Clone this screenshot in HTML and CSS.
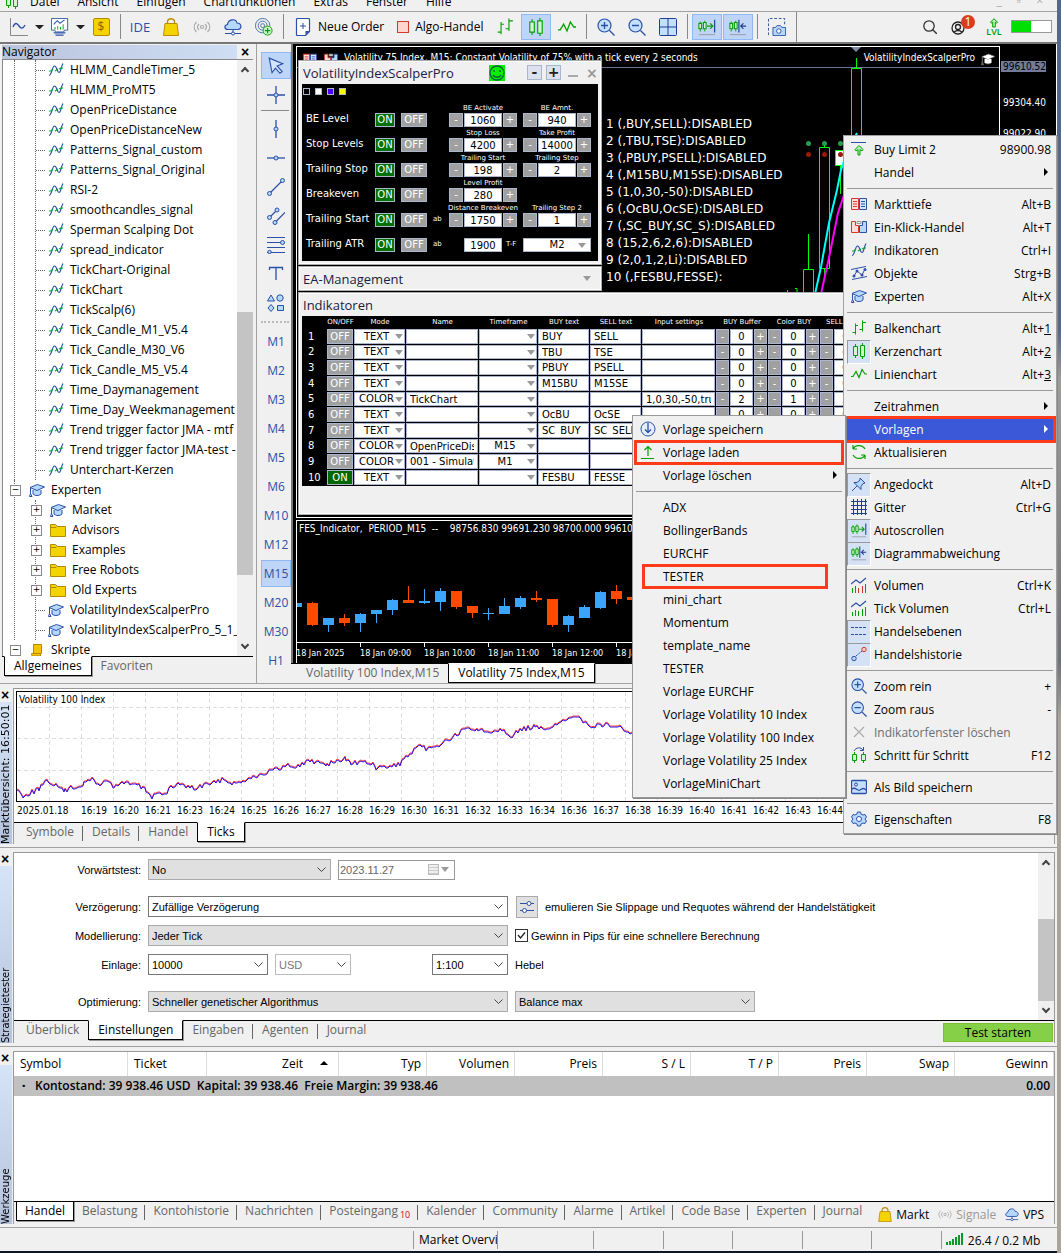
FILE: index.html
```
<!DOCTYPE html>
<html lang="de">
<head>
  <meta charset="UTF-8">
  <meta name="viewport" content="width=device-width, initial-scale=1.0">
  <title>Volatility 75 Index,M15</title>
  <link rel="stylesheet" href="styles.css">
</head>
<body>
  <svg class="sprite" aria-hidden="true">
    <symbol id="i-indicator" viewBox="0 0 16 16"><path d="M1 13.500C4 13 4 4 6.500 4S9 10.500 11 10.500s2-6 4-9" fill="none" stroke="#2b50a8" stroke-width="1.200"/><path d="M1 9h2l2-2M7 9l3-2M11 7l2-1h2" fill="none" stroke="#0a3" stroke-width="1.200"/></symbol>
    <symbol id="i-cap" viewBox="0 0 16 16"><path d="M4 8v4c2 2 6 2 8 0V8" fill="#b5d8ff" stroke="#2b50a8"/><path d="M1 5.500L8.500 2.500 15.500 5 8 8.500z" fill="#b5d8ff" stroke="#2b50a8"/><path d="M1.500 6v6M.5 14.500l1-3 1.500 3z" fill="none" stroke="#2b50a8"/></symbol>
    <symbol id="i-folder" viewBox="0 0 16 16"><path d="M.5 2.500h5l2 2h8v10H.5z" fill="#f4d400" stroke="#b58a00"/><path d="M1 5.500h5l1-1" fill="none" stroke="#b58a00"/></symbol>
    <symbol id="i-script" viewBox="0 0 16 16"><path d="M4.500 2.500h8v9h-8zM2.500 11.500h9v2.500h-8c-1 0-1-1-1-2.500z" fill="#f4c400" stroke="#b58a00"/></symbol>
    <symbol id="i-buylimit" viewBox="0 0 16 16"><path d="M0 1.500h15" stroke="#2b50a8"/><path d="M8 4.500l4 4-1 1.500-2-1.500V14H7V8.500L5 10 4 8.500z" fill="#b7f0b7" stroke="#00a000"/></symbol>
    <symbol id="i-depth" viewBox="0 0 16 16"><path d="M.5 2.500h7v11h-7z" fill="#ffdcd6" stroke="#d0392b"/><path d="M8.500 2.500h7v11h-7z" fill="#d6e6ff" stroke="#2b50a8"/><path d="M2 5.500h4M2 8h4M2 10.500h4" stroke="#d0392b"/><path d="M10 5.500h4M10 8h4M10 10.500h4" stroke="#2b50a8"/></symbol>
    <symbol id="i-oneclick" viewBox="0 0 16 16"><path d="M.5 2.500h4v4h3v7h-7z" fill="#ffdcd6" stroke="#d0392b"/><path d="M15.500 2.500h-4v4h-3v7h7z" fill="#b5d8ff" stroke="#2b50a8"/><path d="M6 2.500h4v2H6z" fill="#fff" stroke="#999"/></symbol>
    <symbol id="i-objects" viewBox="0 0 16 16"><path d="M0 4.500L15 1.500M1 14.500l15-3M3 11l3-5 5 4 3-6" fill="none" stroke="#2b50a8"/><g fill="#2b50a8"><circle cx="3" cy="11" r="1.500"/><circle cx="6" cy="6" r="1.500"/><circle cx="11" cy="10" r="1.500"/><circle cx="14" cy="4.500" r="1.500"/></g></symbol>
    <symbol id="i-bars" viewBox="0 0 16 16"><path d="M4.500 3.500v11M1.500 12.500h3M4 5.500h3M11.500.5v11M8.500 9.500h3M12 2.500h3" fill="none" stroke="#00a000"/></symbol>
    <symbol id="i-candles" viewBox="0 0 16 16"><path d="M4.500 1v14M11.500 0v16" stroke="#00a000"/><path d="M2.500 3.500h4v9h-4zM9.500 2.500h4v11h-4z" fill="#d6f5d6" stroke="#00a000"/></symbol>
    <symbol id="i-line" viewBox="0 0 16 16"><path d="M0 10.500h2l3-5 3 6 3-8 3 4.500h2" fill="none" stroke="#00a000" stroke-width="1.200"/></symbol>
    <symbol id="i-refresh" viewBox="0 0 16 16"><path d="M14 5C11 0 4 1 2 5V1M2 5h4M2 11c3 5 10 4 12 0v4M14 11h-4" fill="none" stroke="#00a000" stroke-width="1.200"/></symbol>
    <symbol id="i-pin" viewBox="0 0 16 16"><path d="M9 2l5 5-2 .5-2 3v3L3 6.500h3l3-2.500zM6 10l-5 5" fill="#b5d8ff" stroke="#2b50a8"/></symbol>
    <symbol id="i-grid" viewBox="0 0 16 16"><path d="M2.500 0v16M6.500 0v16M10.500 0v16M14.500 0v16M0 2.500h16M0 6.500h16M0 10.500h16M0 14.500h16" stroke="#1d3f95"/></symbol>
    <symbol id="i-autoscroll" viewBox="0 0 20 20"><path d="M2.500 4v11M7.500 3v12" stroke="#00a000"/><path d="M1 6h3v6H1zM6 5h3v7H6z" fill="#d6f5d6" stroke="#00a000" stroke-width="1.200"/><path d="M10 9h6M13.500 6l3 3-3 3" fill="none" stroke="#00a000" stroke-width="1.300"/><path d="M18.500 2v14" stroke="#1d3f95" stroke-width="1.300"/><path d="M1 18.500h18" stroke="#999"/></symbol>
    <symbol id="i-shift" viewBox="0 0 20 20"><path d="M2.500 4v11M7.500 3v12" stroke="#00a000"/><path d="M1 6h3v6H1zM6 5h3v7H6z" fill="#d6f5d6" stroke="#00a000" stroke-width="1.200"/><path d="M13 9h6M16 6l-3 3 3 3M11 2v14" fill="none" stroke="#1d3f95" stroke-width="1.300"/><path d="M1 18.500h18" stroke="#999"/></symbol>
    <symbol id="i-volume" viewBox="0 0 16 16"><path d="M0 7l5-4 4 3 6-5" fill="none" stroke="#2b50a8" stroke-width="1.200"/><path d="M1.500 11v5M4.500 9v7M14.500 7v9" stroke="#00a000"/><path d="M7.500 11v5M11.500 9v7" stroke="#d0392b"/></symbol>
    <symbol id="i-tickvolume" viewBox="0 0 16 16"><path d="M0 7l5-4 4 3 6-5" fill="none" stroke="#2b50a8" stroke-width="1.200"/><path d="M1.500 12v4M4.500 10v6M7.500 11v5M11.500 9v7M14.500 7v9" stroke="#00a000"/></symbol>
    <symbol id="i-levels" viewBox="0 0 16 16"><path d="M0 4.500h16M0 11.500h16" stroke="#2b50a8" stroke-dasharray="3 1"/></symbol>
    <symbol id="i-history" viewBox="0 0 16 16"><path d="M5 10l6-5" stroke="#2b50a8" stroke-dasharray="2 1"/><circle cx="3" cy="12.500" r="2.200" fill="#b5d8ff" stroke="#2b50a8"/><circle cx="13" cy="3.500" r="2.200" fill="#ffd0c8" stroke="#d0392b"/></symbol>
    <symbol id="i-zoomin" viewBox="0 0 18 18"><circle cx="7.500" cy="7.500" r="6.500" fill="#c4e0ff" stroke="#2b50a8" stroke-width="1.200"/><path d="M4 7.500h7M7.500 4v7M12.500 12.500l5 5" stroke="#2b50a8" stroke-width="1.400"/></symbol>
    <symbol id="i-zoomout" viewBox="0 0 18 18"><circle cx="7.500" cy="7.500" r="6.500" fill="#c4e0ff" stroke="#2b50a8" stroke-width="1.200"/><path d="M4 7.500h7M12.500 12.500l5 5" stroke="#2b50a8" stroke-width="1.400"/></symbol>
    <symbol id="i-delete" viewBox="0 0 16 16"><path d="M3 3l10 10M13 3L3 13" stroke="#aaa" stroke-width="1.200"/></symbol>
    <symbol id="i-step" viewBox="0 0 16 16"><path d="M3.500 5v11M12.500 5v11" stroke="#00a000"/><path d="M1.500 7.500h4v6h-4zM10.500 7.500h4v6h-4z" fill="#d6f5d6" stroke="#00a000"/><path d="M3 4c2-4 7-4 9-1M12.500 0v3.500H9" fill="none" stroke="#2b50a8"/></symbol>
    <symbol id="i-image" viewBox="0 0 16 16"><rect x=".5" y="1.500" width="15" height="13" rx="1" fill="#c4e0ff" stroke="#2b50a8" stroke-width="1.300"/><path d="M1 10c4-3 5 3 8 1s4-2 6 0" fill="none" stroke="#2b50a8" stroke-width="1.300"/><circle cx="5" cy="5.500" r="1.500" fill="none" stroke="#2b50a8"/></symbol>
    <symbol id="i-gear" viewBox="0 0 16 16"><path d="M6.500 1h3l.5 2 2 1 2-.5 1.500 2.500L14 8l1.500 2-1.500 2.500-2-.5-2 1-.5 2h-3L6 13l-2-1-2 .5L.5 10 2 8 .5 6 2 3.500 4 4l2-1z" fill="#b5d8ff" stroke="#2b50a8"/><circle cx="8" cy="8" r="2.500" fill="#fff" stroke="#2b50a8"/></symbol>
    <symbol id="i-save" viewBox="0 0 16 16"><circle cx="8" cy="8" r="7" fill="#e4efff" stroke="#2b50a8"/><path d="M8 2v9M5 8.500l3 3 3-3" fill="none" stroke="#2b50a8" stroke-width="1.300"/></symbol>
    <symbol id="i-load" viewBox="0 0 16 16"><path d="M8 3v9M4.500 6L8 2.500 11.500 6M1 14.500h13" fill="none" stroke="#00a000" stroke-width="1.200"/></symbol>
    <symbol id="i-chart" viewBox="0 0 18 18"><path d="M.5 0v17.500H18" fill="none" stroke="#888"/><path d="M3 9c2-5 4-4 6-1s4 3 6-1" fill="none" stroke="#2b50a8" stroke-width="1.400"/></symbol>
    <symbol id="i-charts" viewBox="0 0 20 20"><path d="M.5.5h18v13H15l-1 2H5l-1-2H.5z" fill="#fff" stroke="#2b50a8"/><path d="M3 16.500h13M5 19h9" stroke="#2b50a8" stroke-width="1.200"/><path d="M3 7l4-4 3 3 5-4" fill="none" stroke="#2b50a8" stroke-width="1.200"/><path d="M4.500 10v3M7.500 9v4M10.500 10v3M13.500 7v6" stroke="#00a000"/></symbol>
    <symbol id="i-bag" viewBox="0 0 16 18"><path d="M4.500 6V3c1-3 6-3 7 0v3" fill="none" stroke="#c08a00" stroke-width="1.300"/><path d="M2 5.500h12l1.500 12H.5z" fill="#f4d400" stroke="#c08a00"/></symbol>
    <symbol id="i-signal" viewBox="0 0 18 16"><g fill="none" stroke="#aaa" stroke-width="1.200"><circle cx="9" cy="8" r="1.500"/><path d="M6 5c-2 2-2 4 0 6M12 5c2 2 2 4 0 6M3.500 3c-3 3-3 7 0 10M14.500 3c3 3 3 7 0 10"/></g></symbol>
    <symbol id="i-cloud" viewBox="0 0 18 18"><path d="M4 11.500C0 11.500 0 7 3.500 6.500 4 1 12 0 13 5c5 0 5 6.500 1 6.500z" fill="#b5d8ff" stroke="#2b50a8" stroke-width="1.200"/><path d="M9 12v3M1 15.500h16" stroke="#2b50a8"/><circle cx="9" cy="15.500" r="1.500" fill="#fff" stroke="#2b50a8"/></symbol>
    <symbol id="i-target" viewBox="0 0 20 20"><g fill="none" stroke="#3d66a8"><circle cx="8.500" cy="8.500" r="8"/><circle cx="8.500" cy="8.500" r="5"/><circle cx="8.500" cy="8.500" r="2.200"/></g><circle cx="14" cy="14" r="5" fill="#c8f5c8" stroke="#00a000"/><path d="M11 14h6M14 11v6" stroke="#00a000" stroke-width="1.300"/></symbol>
    <symbol id="i-order" viewBox="0 0 14 18"><path d="M.5 1.500q0-1 1-1h11q1 0 1 1v12l-4 4h-8q-1 0-1-1z" fill="#fff" stroke="#2b50a8" stroke-width="1.200"/><path d="M9.500 17v-4h4" fill="#2b50a8"/><path d="M4 8h6M7 5v6" stroke="#2b50a8"/></symbol>
    <symbol id="i-windows" viewBox="0 0 18 18"><rect x=".5" y=".5" width="17" height="17" rx="1" fill="#c4e0ff" stroke="#1d3f95"/><path d="M9 0v18M0 9h18" stroke="#1d3f95"/></symbol>
    <symbol id="i-camera" viewBox="0 0 20 20"><path d="M.5 19V.5h18V7" fill="none" stroke="#1d3f95" stroke-dasharray="3 2"/><path d="M5.500 10.500h3l1.500-2h4l1.500 2h4v9h-14z" fill="#b5d8ff" stroke="#2b50a8"/><circle cx="12" cy="14.500" r="2.500" fill="#fff" stroke="#2b50a8"/></symbol>
    <symbol id="i-search" viewBox="0 0 14 14"><circle cx="6" cy="6" r="5.200" fill="none" stroke="#333" stroke-width="1.300"/><path d="M9.500 9.500L14 14" stroke="#333" stroke-width="1.400"/></symbol>
    <symbol id="i-user" viewBox="0 0 22 20"><circle cx="7" cy="11" r="6" fill="none" stroke="#222" stroke-width="1.300"/><circle cx="7" cy="10" r="2.500" fill="none" stroke="#222" stroke-width="1.300"/><path d="M3 15q4-3 8 0" fill="none" stroke="#222" stroke-width="1.300"/></symbol>
    <symbol id="i-lvl" viewBox="0 0 10 10"><path d="M5 .7l3.500 3.500-1 1-1.200-1V9H3.700V4.200l-1.200 1-1-1z" fill="#b7f0b7" stroke="#00a000"/></symbol>
    <symbol id="i-cursor" viewBox="0 0 16 16"><path d="M2 1l12 5-5 2 4.500 5-2 1.500L7.500 10 4.500 14z" fill="#d2e7ff" stroke="#2b50a8"/></symbol>
    <symbol id="i-cross" viewBox="0 0 18 18"><path d="M9 0v18M0 9h18" stroke="#2b50a8" stroke-width="1.300"/><circle cx="9" cy="9" r="2" fill="#b5d8ff" stroke="#2b50a8"/></symbol>
    <symbol id="i-vline" viewBox="0 0 18 18"><path d="M9 0v18" stroke="#2b50a8" stroke-width="1.300"/><circle cx="9" cy="9" r="2" fill="#b5d8ff" stroke="#2b50a8"/></symbol>
    <symbol id="i-hline" viewBox="0 0 18 18"><path d="M0 9h18" stroke="#2b50a8" stroke-width="1.300"/><circle cx="9" cy="9" r="2" fill="#b5d8ff" stroke="#2b50a8"/></symbol>
    <symbol id="i-trend" viewBox="0 0 18 18"><path d="M2 16L16 2" stroke="#2b50a8" stroke-width="1.200"/><circle cx="2.500" cy="15.500" r="2" fill="#b5d8ff" stroke="#2b50a8"/><circle cx="15.500" cy="2.500" r="2" fill="#b5d8ff" stroke="#2b50a8"/></symbol>
    <symbol id="i-channel" viewBox="0 0 18 18"><path d="M2 11l8-8M8 15.500L18 5.500" stroke="#2b50a8" stroke-width="1.200"/><g fill="#b5d8ff" stroke="#2b50a8"><circle cx="2.500" cy="10.500" r="2"/><circle cx="10" cy="3" r="2"/><circle cx="8" cy="15.500" r="2"/></g></symbol>
    <symbol id="i-fibo" viewBox="0 0 18 18"><path d="M0 1.500h18M0 6.500h18M0 11.500h18M0 16.500h18" stroke="#2b50a8"/><circle cx="15.500" cy="6.500" r="2" fill="#b5d8ff" stroke="#2b50a8"/><circle cx="2.500" cy="16" r="1.700" fill="#b5d8ff" stroke="#2b50a8"/></symbol>
    <symbol id="i-tee" viewBox="0 0 18 18"><path d="M2.500 5V2.500h13V5M9 3v12" fill="none" stroke="#2b50a8" stroke-width="1.300"/></symbol>
    <symbol id="i-shapes" viewBox="0 0 18 18"><g fill="#b5d8ff" stroke="#2b50a8"><path d="M4 1l3.500 6H.5zM4 10.500l3 3.500-3 3.500L1 14z"/><circle cx="13" cy="4" r="3.200"/><path d="M10.500 11.500h6v5h-6z"/></g></symbol>
    <symbol id="i-sliders" viewBox="0 0 16 16"><path d="M1 4.500h14M1 11.500h14" stroke="#2b50a8"/><circle cx="10" cy="4.500" r="2" fill="#fff" stroke="#2b50a8"/><circle cx="5.500" cy="11.500" r="2" fill="#fff" stroke="#2b50a8"/></symbol>
    <symbol id="i-smiley" viewBox="0 0 16 16"><path d="M0 0h16v16H0z" fill="#00f000"/><circle cx="8" cy="8" r="7" fill="none" stroke="#063" stroke-width="1.300"/><path d="M5 5v2M11 5v2M4 10c2 3 6 3 8 0" fill="none" stroke="#063" stroke-width="1.400"/></symbol>
  </svg>

  <nav class="menubar">
    <svg class="icon"><use href="#i-candles"/></svg>
    <a href="#">Datei</a>
    <a href="#">Ansicht</a>
    <a href="#">Einfügen</a>
    <a href="#">Chartfunktionen</a>
    <a href="#">Extras</a>
    <a href="#">Fenster</a>
    <a href="#">Hilfe</a>
    <span class="window-controls">_ ▫ ×</span>
  </nav>

  <div class="toolbar">
    <button class="tool" aria-label="Chart"><svg><use href="#i-chart"/></svg></button>
    <span class="caret"></span>
    <button class="tool" aria-label="Profile"><svg><use href="#i-charts"/></svg></button>
    <span class="caret"></span>
    <button class="tool" aria-label="Symbole"><span class="dollar">$</span></button>
    <span class="sep"></span>
    <button class="tool ide">IDE</button>
    <button class="tool" aria-label="Markt"><svg><use href="#i-bag"/></svg></button>
    <button class="tool" aria-label="Signale"><svg><use href="#i-signal"/></svg></button>
    <button class="tool" aria-label="VPS"><svg><use href="#i-cloud"/></svg></button>
    <button class="tool" aria-label="Community"><svg><use href="#i-target"/></svg></button>
    <span class="sep"></span>
    <button class="tool wide"><svg><use href="#i-order"/></svg>Neue Order</button>
    <button class="tool wide"><span class="stop"></span>Algo-Handel</button>
    <button class="tool" aria-label="Balkenchart"><svg><use href="#i-bars"/></svg></button>
    <button class="tool on" aria-label="Kerzenchart"><svg><use href="#i-candles"/></svg></button>
    <button class="tool" aria-label="Linienchart"><svg><use href="#i-line"/></svg></button>
    <span class="sep"></span>
    <button class="tool" aria-label="Zoom rein"><svg><use href="#i-zoomin"/></svg></button>
    <button class="tool" aria-label="Zoom raus"><svg><use href="#i-zoomout"/></svg></button>
    <button class="tool" aria-label="Fenster anordnen"><svg><use href="#i-windows"/></svg></button>
    <span class="sep"></span>
    <button class="tool on" aria-label="Autoscrollen"><svg><use href="#i-autoscroll"/></svg></button>
    <button class="tool on" aria-label="Diagrammabweichung"><svg><use href="#i-shift"/></svg></button>
    <span class="sep"></span>
    <button class="tool" aria-label="Bildschirmfoto"><svg><use href="#i-camera"/></svg></button>
    <span class="sep end"></span>
    <div class="toolbar-right">
      <button class="tool" aria-label="Suche"><svg class="small"><use href="#i-search"/></svg></button>
      <button class="tool account" aria-label="Konto"><svg class="user"><use href="#i-user"/></svg><span class="badge">1</span></button>
      <button class="tool lvl"><svg><use href="#i-lvl"/></svg>LVL</button>
      <meter class="battery" min="0" max="100" value="48" aria-label="Level"></meter>
    </div>
  </div>

  <div class="workspace">
    <aside class="navigator">
      <div class="nav-title"><span>Navigator</span><button aria-label="Schließen">×</button></div>
      <div class="nav-body">
        <ul class="tree" id="tree"></ul>
        <div class="scrollbar nav-scroll"><i class="up"></i><span class="thumb"></span><i class="down"></i></div>
      </div>
      <div class="tabs nav-tabs">
        <a href="#" class="active">Allgemeines</a>
        <a href="#">Favoriten</a>
      </div>
    </aside>

    <div class="side-tools">
      <button class="on" aria-label="Cursor"><svg><use href="#i-cursor"/></svg></button>
      <button aria-label="Fadenkreuz"><svg><use href="#i-cross"/></svg></button>
      <hr>
      <button aria-label="Vertikale Linie"><svg><use href="#i-vline"/></svg></button>
      <button aria-label="Horizontale Linie"><svg><use href="#i-hline"/></svg></button>
      <button aria-label="Trendlinie"><svg><use href="#i-trend"/></svg></button>
      <button aria-label="Kanal"><svg><use href="#i-channel"/></svg></button>
      <button aria-label="Fibonacci"><svg><use href="#i-fibo"/></svg></button>
      <button aria-label="Text"><svg><use href="#i-tee"/></svg></button>
      <button aria-label="Formen"><svg><use href="#i-shapes"/></svg></button>
      <hr class="dots">
      <button>M1</button>
      <button>M2</button>
      <button>M3</button>
      <button>M4</button>
      <button>M5</button>
      <button>M6</button>
      <button>M10</button>
      <button>M12</button>
      <button class="on">M15</button>
      <button>M20</button>
      <button>M30</button>
      <button>H1</button>
    </div>

    <main class="chart-area">
      <div class="chart">
        <section class="plot">
          <div class="plot-head">
            <svg class="icon"><use href="#i-depth"/></svg>
            <svg class="icon"><use href="#i-oneclick"/></svg>
            <span>Volatility 75 Index, M15: Constant Volatility of 75% with a tick every 2 seconds</span>
            <span class="expert">VolatilityIndexScalperPro <svg class="icon"><use href="#i-cap"/></svg></span>
          </div>
          <div class="price-line"></div>
          <svg class="candles" width="220" height="260" viewBox="779 47 220 260">
            <path d="M851 47h10l-5 5z" fill="#7d88a6"/>
            <g fill="none" stroke="#0f0">
              <path d="M856.500 58v10M851.500 68.500h10v200h-10zM824.500 143v4M819.500 147.500h10v121h-10zM824.500 269v8M840.500 166v28M808.500 234v35M803.500 269.500h10v30h-10zM787.500 290v9M795 288.500h2v10"/>
              <path d="M835.500 150.500h10v15h-10z" fill="#fff"/>
            </g>
            <path d="M815 294l6-27 8-44 8-33 4-20 4-12 12-25" fill="none" stroke="#0ff" stroke-width="2"/>
            <path d="M821 294l9-41 8-40 6-18" fill="none" stroke="#f0f" stroke-width="2"/>
            <g fill="#2a9d55"><circle cx="808.500" cy="143.500" r="2.500"/><circle cx="824.500" cy="143.500" r="2.500"/><circle cx="840.500" cy="143.500" r="2.500"/></g>
            <g fill="#a01808"><circle cx="808.500" cy="154.500" r="2.500"/><circle cx="824.500" cy="154.500" r="2.500"/><circle cx="840.500" cy="154.500" r="2.500"/></g>
          </svg>
          <ol class="signals">
            <li>1 (,BUY,SELL):DISABLED</li>
            <li>2 (,TBU,TSE):DISABLED</li>
            <li>3 (,PBUY,PSELL):DISABLED</li>
            <li>4 (,M15BU,M15SE):DISABLED</li>
            <li>5 (1,0,30,-50):DISABLED</li>
            <li>6 (,OcBU,OcSE):DISABLED</li>
            <li>7 (,SC_BUY,SC_S):DISABLED</li>
            <li>8 (15,2,6,2,6):DISABLED</li>
            <li>9 (2,0,1,2,Li):DISABLED</li>
            <li>10 (,FESBU,FESSE):</li>
          </ol>

          <div class="panels">
            <div class="panel ea">
              <div class="panel-title">
                <span>VolatilityIndexScalperPro</span>
                <svg class="smiley"><use href="#i-smiley"/></svg>
                <button class="pm">-</button>
                <button class="pm">+</button>
                <i class="min"></i><i class="close">×</i>
              </div>
              <div class="panel-body">
                <div class="swatches"><i></i><i></i><i></i><i></i></div>
                <div class="ea-grid" id="ea"></div>
              </div>
            </div>
            <div class="panel folded"><span>EA-Management</span><i class="drop"></i></div>
            <div class="panel indicators">
              <div class="panel-title"><span>Indikatoren</span></div>
              <div class="panel-body">
                <table>
                  <colgroup>
                    <col class="c-no"><col class="c-on"><col class="c-mode"><col class="c-name"><col class="c-tf"><col class="c-text"><col class="c-text"><col class="c-set">
                    <col class="c-pm"><col class="c-val"><col class="c-pm"><col class="c-pm"><col class="c-val"><col class="c-pm"><col class="c-pm"><col class="c-val"><col class="c-pm">
                  </colgroup>
                  <thead>
                    <tr>
                      <th></th><th>ON/OFF</th><th>Mode</th><th>Name</th><th>Timeframe</th><th>BUY text</th><th>SELL text</th><th>Input settings</th>
                      <th colspan="3">BUY Buffer</th><th colspan="3">Color BUY</th><th colspan="3">SELL Buffer</th>
                    </tr>
                  </thead>
                  <tbody id="indicators"></tbody>
                </table>
              </div>
            </div>
          </div>
        </section>
        <div class="price-axis">
          <span class="now">99610.52</span>
          <span>99304.40</span>
          <span>99022.90</span>
        </div>
        <section class="subplot">
          <p>FES_Indicator,&nbsp; PERIOD_M15&nbsp; --&nbsp; &nbsp; 98756.830 99691.230 98700.000 99610.520</p>
          <svg id="fes" width="360" height="104" viewBox="297 537 360 104"></svg>
          <div class="time-axis">
            <span>18 Jan 2025</span><span>18 Jan 09:00</span><span>18 Jan 10:00</span><span>18 Jan 11:00</span><span>18 Jan 12:00</span><span>18 Jan 13:00</span>
          </div>
        </section>
      </div>
      <div class="tabs chart-tabs">
        <a href="#">Volatility 100 Index,M15</a>
        <a href="#" class="active">Volatility 75 Index,M15</a>
      </div>
    </main>
  </div>

  <section class="dock market">
    <div class="handle"><button aria-label="Schließen">×</button><span>Marktübersicht: 16:50:01</span></div>
    <div class="dock-body">
      <div class="ticks">
        <h2>Volatility 100 Index</h2>
        <svg id="ticks" width="100%" height="109"></svg>
      </div>
      <div class="tick-times" id="times"></div>
      <div class="tabs">
        <a href="#">Symbole</a>
        <a href="#">Details</a>
        <a href="#">Handel</a>
        <a href="#" class="active">Ticks</a>
      </div>
    </div>
  </section>

  <section class="dock tester">
    <div class="handle"><button aria-label="Schließen">×</button><span>Strategietester</span></div>
    <div class="dock-body">
      <div class="tester-main">
        <form class="settings">
          <div class="row">
            <label for="forward">Vorwärtstest:</label>
            <select id="forward" class="w-m"><option>No</option></select>
            <div class="date"><input type="text" value="2023.11.27" aria-label="Datum" disabled><i class="cal"></i><i class="drop"></i></div>
          </div>
          <div class="row loose">
            <label for="delay">Verzögerung:</label>
            <select id="delay" class="w-l white"><option>Zufällige Verzögerung</option></select>
            <button type="button" class="adjust" aria-label="Anpassen"><svg><use href="#i-sliders"/></svg></button>
            <span class="note">emulieren Sie Slippage und Requotes während der Handelstätigkeit</span>
          </div>
          <div class="row">
            <label for="model">Modellierung:</label>
            <select id="model" class="w-l"><option>Jeder Tick</option></select>
            <span class="check"><input type="checkbox" id="pips" checked><label for="pips">Gewinn in Pips für eine schnellere Berechnung</label></span>
          </div>
          <div class="row">
            <label for="deposit">Einlage:</label>
            <select id="deposit" class="w-s white"><option>10000</option></select>
            <select class="w-xs white" aria-label="Währung" disabled><option>USD</option></select>
            <select id="leverage" class="w-xs white lever"><option>1:100</option></select>
            <label for="leverage" class="after">Hebel</label>
          </div>
          <div class="row loose">
            <label for="opt">Optimierung:</label>
            <select id="opt" class="w-l"><option>Schneller genetischer Algorithmus</option></select>
            <select class="w-b" aria-label="Kriterium"><option>Balance max</option></select>
          </div>
        </form>
        <div class="scrollbar"><i class="up"></i><span class="thumb"></span><i class="down"></i></div>
      </div>
      <div class="tabs">
        <a href="#">Überblick</a>
        <a href="#" class="active">Einstellungen</a>
        <a href="#">Eingaben</a>
        <a href="#">Agenten</a>
        <a href="#" class="last">Journal</a>
        <button class="start">Test starten</button>
      </div>
    </div>
  </section>

  <section class="dock toolbox">
    <div class="handle"><button aria-label="Schließen">×</button><span>Werkzeuge</span></div>
    <div class="dock-body">
      <table class="trades">
        <colgroup><col class="t-symbol"><col class="t-ticket"><col class="t-time"><col span="7" class="t-num"><col></colgroup>
        <thead>
          <tr><th>Symbol</th><th>Ticket</th><th class="sorted">Zeit<i></i></th><th>Typ</th><th>Volumen</th><th>Preis</th><th>S / L</th><th>T / P</th><th>Preis</th><th>Swap</th><th>Gewinn</th></tr>
        </thead>
        <tbody>
          <tr><td colspan="10"><b>·</b>Kontostand: 39 938.46 USD&nbsp; Kapital: 39 938.46&nbsp; Freie Margin: 39 938.46</td><td>0.00</td></tr>
        </tbody>
      </table>
      <div class="tabs">
        <a href="#" class="active">Handel</a>
        <a href="#">Belastung</a>
        <a href="#">Kontohistorie</a>
        <a href="#">Nachrichten</a>
        <a href="#">Posteingang<sub>10</sub></a>
        <a href="#">Kalender</a>
        <a href="#">Community</a>
        <a href="#">Alarme</a>
        <a href="#">Artikel</a>
        <a href="#">Code Base</a>
        <a href="#">Experten</a>
        <a href="#" class="last">Journal</a>
        <div class="services">
          <button><svg><use href="#i-bag"/></svg>Markt</button>
          <button disabled><svg><use href="#i-signal"/></svg>Signale</button>
          <button><svg><use href="#i-cloud"/></svg>VPS</button>
        </div>
      </div>
    </div>
  </section>

  <footer class="status">
    <span class="help"></span>
    <span class="profile">Market Overview</span>
    <span class="cell wide"></span><span class="cell"></span><span class="cell"></span><span class="cell"></span><span class="cell"></span><span class="cell"></span>
    <span class="traffic"><i></i><i></i><i></i><i></i><i></i><i></i>26.4 / 0.2 Mb</span>
  </footer>

  <div class="context" role="menu">
    <button><svg><use href="#i-buylimit"/></svg>Buy Limit 2<kbd>98900.98</kbd></button>
    <button class="more">Handel</button>
    <hr>
    <button><svg><use href="#i-depth"/></svg>Markttiefe<kbd>Alt+B</kbd></button>
    <button><svg><use href="#i-oneclick"/></svg>Ein-Klick-Handel<kbd>Alt+T</kbd></button>
    <button><svg><use href="#i-indicator"/></svg>Indikatoren<kbd>Ctrl+I</kbd></button>
    <button><svg><use href="#i-objects"/></svg>Objekte<kbd>Strg+B</kbd></button>
    <button><svg><use href="#i-cap"/></svg>Experten<kbd>Alt+X</kbd></button>
    <hr>
    <button><svg><use href="#i-bars"/></svg>Balkenchart<kbd>Alt+<u>1</u></kbd></button>
    <button class="checked"><svg><use href="#i-candles"/></svg>Kerzenchart<kbd>Alt+<u>2</u></kbd></button>
    <button><svg><use href="#i-line"/></svg>Linienchart<kbd>Alt+<u>3</u></kbd></button>
    <hr>
    <button class="more">Zeitrahmen</button>
    <button class="more current marked">Vorlagen</button>
    <button><svg><use href="#i-refresh"/></svg>Aktualisieren</button>
    <hr>
    <button class="checked"><svg><use href="#i-pin"/></svg>Angedockt<kbd>Alt+D</kbd></button>
    <button><svg><use href="#i-grid"/></svg>Gitter<kbd>Ctrl+G</kbd></button>
    <button class="checked"><svg><use href="#i-autoscroll"/></svg>Autoscrollen</button>
    <button class="checked"><svg><use href="#i-shift"/></svg>Diagrammabweichung</button>
    <hr>
    <button><svg><use href="#i-volume"/></svg>Volumen<kbd>Ctrl+K</kbd></button>
    <button><svg><use href="#i-tickvolume"/></svg>Tick Volumen<kbd>Ctrl+L</kbd></button>
    <button class="checked"><svg><use href="#i-levels"/></svg>Handelsebenen</button>
    <button class="checked"><svg><use href="#i-history"/></svg>Handelshistorie</button>
    <hr>
    <button><svg><use href="#i-zoomin"/></svg>Zoom rein<kbd>+</kbd></button>
    <button><svg><use href="#i-zoomout"/></svg>Zoom raus<kbd>-</kbd></button>
    <button disabled><svg><use href="#i-delete"/></svg>Indikatorfenster löschen</button>
    <button><svg><use href="#i-step"/></svg>Schritt für Schritt<kbd>F12</kbd></button>
    <hr>
    <button><svg><use href="#i-image"/></svg>Als Bild speichern</button>
    <hr>
    <button><svg><use href="#i-gear"/></svg>Eigenschaften<kbd>F8</kbd></button>

    <div class="submenu" role="menu">
      <button><svg><use href="#i-save"/></svg>Vorlage speichern</button>
      <button class="marked"><svg><use href="#i-load"/></svg>Vorlage laden</button>
      <button class="more">Vorlage löschen</button>
      <hr>
      <button>ADX</button>
      <button>BollingerBands</button>
      <button>EURCHF</button>
      <button class="marked short">TESTER</button>
      <button>mini_chart</button>
      <button>Momentum</button>
      <button>template_name</button>
      <button>TESTER</button>
      <button>Vorlage EURCHF</button>
      <button>Vorlage Volatility 10 Index</button>
      <button>Vorlage Volatility 100 Index</button>
      <button>Vorlage Volatility 25 Index</button>
      <button>VorlageMiniChart</button>
    </div>
  </div>

  <script src="app.js"></script>
</body>
</html>
```
FILE: styles.css
```
* { box-sizing: border-box; }
body {
  margin: 0;
  padding-right: 4px;
  min-height: 100vh;
  display: flex;
  flex-direction: column;
  position: relative;
  font: 12px/16px "Open Sans", "Noto Sans", sans-serif;
  color: #000;
  background: linear-gradient(#55678a 330px, #a09c98 380px, #8b8b8b 500px, #6d7278 660px, #aaa49c 720px);
  overflow-x: hidden;
}
button, input, select { font: inherit; color: inherit; margin: 0; }
button { border: 0; padding: 0; background: none; white-space: nowrap; }
a { color: inherit; text-decoration: none; }
ul, ol { margin: 0; padding: 0; list-style: none; }
.sprite { position: absolute; width: 0; height: 0; }
.icon { width: 16px; height: 16px; flex: none; }

/* menu + toolbar */
.menubar {
  display: flex;
  align-items: flex-end;
  height: 11px;
  overflow: hidden;
  background: #f0f0f0;
  padding: 0 14px 2px 4px;
}
.menubar a { margin-right: 18px; line-height: 15px; }
.menubar .icon { margin-right: 10px; }
.window-controls { margin-left: auto; color: #aaa; word-spacing: 12px; }
.toolbar {
  display: flex;
  align-items: center;
  gap: 1px;
  height: 33px;
  padding: 0 5px 1px 4px;
  background: #f0f0f0;
  border-top: 1px solid #a0a0a0;
  border-bottom: 2px solid #777;
}
.tool {
  display: flex;
  align-items: center;
  justify-content: center;
  width: 30px;
  height: 26px;
  flex: none;
  border: 1px solid transparent;
}
.tool svg { width: 18px; height: 18px; }
.tool.on { background: #bfd5f7; border-color: #8fb8f5; }
.tool.wide { width: auto; gap: 6px; padding: 0 5px; }
.tool.ide { color: #2b50a8; font-size: 13px; }
.tool svg.small { width: 14px; height: 14px; }
.tool svg.user { width: 22px; height: 20px; }
.caret { width: 9px; border: 4px solid transparent; border-top-color: #222; border-bottom: 0; }
.dollar {
  width: 17px;
  height: 18px;
  border: 1px solid #b58a00;
  border-radius: 2px;
  background: #f4d400;
  color: #8a6000;
  line-height: 16px;
}
.sep { width: 1px; height: 25px; margin: 0 3px; background: #888; }
.sep.end { height: 30px; }
.stop { width: 12px; height: 12px; border: 1px solid #d0392b; background: #ffd6cd; }
.toolbar-right { display: flex; align-items: center; gap: 2px; margin-left: auto; }
.account { position: relative; }
.badge {
  position: absolute;
  top: 0;
  right: 1px;
  width: 14px;
  height: 14px;
  border-radius: 50%;
  background: #dc3c1e;
  color: #fff;
  line-height: 14px;
}
.lvl { flex-direction: column; font-size: 9px; line-height: 8px; color: #00a000; font-weight: 600; }
.tool.lvl svg { width: 10px; height: 10px; }
.battery { appearance: none; width: 41px; height: 13px; border: 1px solid #999; background: linear-gradient(90deg, #00e000 48%, #fff 48%); }
.battery::-webkit-meter-inner-element { visibility: hidden; }

/* navigator */
.workspace { display: flex; background: #f0f0f0; border-bottom: 1px solid #a0a0a0; }
.navigator { width: 257px; flex: none; padding: 1px 3px 6px 2px; border-right: 1px solid #a0a0a0; }
.nav-title { display: flex; height: 14px; line-height: 13px; }
.nav-title span { flex: 1; background: linear-gradient(90deg, #b8c4dc, #d0def4); }
.nav-title button, .handle button { width: 16px; font: bold 14px/13px "Liberation Sans", sans-serif; }
.nav-body { display: flex; height: 597px; border-top: 1px solid #888; border-left: 1px solid #888; background: #fff; }
.tree { flex: 1; min-width: 0; padding-left: 11px; overflow: hidden; }
.tree > li { border-left: 1px dotted #666; }
.tree > li:last-child { border-color: transparent; }
.branch { margin-left: 20px; border-left: 1px dotted #666; }
.node { display: flex; align-items: center; height: 20px; white-space: nowrap; }
.node::before { content: ""; width: 9px; border-top: 1px dotted #666; margin-right: 3px; flex: none; }
.node .icon { margin-right: 6px; }
.node.box::before {
  content: "+";
  width: 9px;
  height: 9px;
  margin: 0 8px 0 -5px;
  border: 1px solid #888;
  background: #fff;
  font: 9px/7px "DejaVu Sans", sans-serif;
  text-align: center;
}
.node.open::before { content: "−"; }
.scrollbar { display: flex; flex-direction: column; width: 16px; flex: none; background: #f0f0f0; }
.scrollbar .thumb { background: #c4c4c4; }
.scrollbar i { width: 6px; height: 6px; margin: 8px 5px; border: solid #444; border-width: 2px 0 0 2px; transform: rotate(45deg); }
.scrollbar i.down { transform: rotate(225deg); margin-top: auto; }
.nav-scroll .thumb { height: 263px; margin-top: 230px; }

/* tabs */
.tabs { display: flex; border-top: 1px solid #000; height: 23px; color: #666; background: #f0f0f0; white-space: nowrap; }
.tabs a { position: relative; padding: 1px 9px; height: 20px; }
.tabs a::after { content: ""; position: absolute; right: 0; top: 3px; height: 15px; border-right: 1px solid #666; }
.tabs a.active {
  margin-top: -1px;
  border: 1px solid #000;
  border-top-color: #fff;
  background: #fff;
  color: #000;
  box-shadow: 1px 1px #999;
}
.tabs a.active::after, .tabs a:has(+ .active)::after, .nav-tabs a::after, .tabs a.last::after { display: none; }
.nav-tabs { height: 21px; padding-left: 2px; }
.chart-tabs { height: 20px; padding-left: 6px; }

/* line studies + timeframes */
.side-tools { width: 34px; flex: none; padding: 8px 2px 0 4px; }
.side-tools button {
  display: flex;
  align-items: center;
  justify-content: center;
  width: 30px;
  height: 27px;
  margin-bottom: 2px;
  border: 1px solid transparent;
  color: #2b50a8;
}
.side-tools button.on { background: #bfd5f7; border-color: #8fb8f5; }
.side-tools svg { width: 18px; height: 18px; }
.side-tools hr { margin: 2px 0 4px; border: 0; border-top: 1px solid #888; }
.side-tools hr.dots { margin: 5px 0; border-top: 2px dotted #bbb; }

/* chart */
.chart-area { flex: 1; min-width: 0; display: flex; flex-direction: column; border-right: 1px solid #fff; }
.chart {
  flex: 1;
  display: grid;
  grid-template: 1fr 143px / 1fr 56px;
  padding: 2px 0 0 3px;
  border-left: 2px solid #777;
  background: #000;
  color: #fff;
  font: 10px/12px "DejaVu Sans Condensed", "DejaVu Sans", sans-serif;
  overflow: hidden;
}
.plot { position: relative; border: 1px solid #fff; margin-bottom: 2px; }
.plot-head { display: flex; gap: 5px; padding: 5px 3px 0 5px; white-space: nowrap; }
.plot-head .expert { display: flex; gap: 5px; margin-left: auto; }
.plot-head .icon { height: 14px; }
.expert .icon { filter: grayscale(1) brightness(1.600); }
.price-line { position: absolute; top: 20px; left: 0; right: 0; border-top: 1px solid #6b7594; }
.candles { position: absolute; top: 0; right: 0; }
.signals { position: absolute; top: 69px; left: 309px; font: 12px/17px "DejaVu Sans", sans-serif; white-space: nowrap; }
.price-axis { padding-top: 15px; }
.price-axis span { display: block; margin-bottom: 19px; padding-left: 3px; }
.price-axis .now { background: #727c98; color: #000; margin: 0 10px 25px 1px; padding-left: 2px; line-height: 11px; }
.subplot { border: 1px solid #fff; border-width: 1px 0 0 1px; grid-column: 1 / 3; overflow: hidden; }
.subplot p { margin: 0; padding: 2px; height: 17px; white-space: pre; }
.subplot svg { display: block; }
.time-axis { display: flex; border-top: 1px solid #fff; margin-left: -1px; }
.time-axis span { flex: 0 0 64px; padding-top: 4px; white-space: nowrap; font-size: 9px; background: linear-gradient(#fff, #fff) 0 0 / 1px 4px no-repeat; }

/* expert advisor panels */
.panels { position: absolute; top: 13px; left: 1px; display: flex; flex-direction: column; align-items: flex-start; gap: 1px; font: 10px/12px "DejaVu Sans", sans-serif; }
.panel { width: 304px; border: 1px solid #aaa; outline: 1px solid #fff; outline-offset: -2px; background: #f0f0f0; padding: 0 3px 3px; }
.panel-title { display: flex; align-items: center; height: 23px; gap: 4px; font: 13px/20px "Open Sans", sans-serif; color: #1c1c44; padding: 0 2px 0 1px; }
.panel-title span { margin-right: auto; }
.smiley { width: 16px; height: 16px; margin-right: 18px; }
.pm { width: 15px; height: 15px; border: 1px solid #a9b6cc; background: #dbe2ee; color: #222; font: bold 14px/11px "DejaVu Sans", sans-serif; }
.min { width: 10px; height: 9px; margin: 0 4px 0 3px; border-bottom: 2px solid #aaa; }
.close { width: 10px; font: bold 14px/14px "DejaVu Sans", sans-serif; color: #999; }
.panel-body { background: #000; color: #fff; }
.swatches { display: flex; gap: 5px; padding: 4px 0 0 1px; }
.swatches i { width: 7px; height: 7px; border: 1px solid #a9b6cc; }
.swatches i:nth-child(2) { background: #fff; }
.swatches i:nth-child(3) { background: #4a00ff; }
.swatches i:nth-child(4) { background: #ff0; }
.ea-grid { display: grid; grid-template-columns: 63px 20px 26px 10px 68px 68px; column-gap: 6px; padding: 7px 4px 9px; }
.ea-grid > * { height: 25px; padding-top: 11px; white-space: nowrap; }
.ea-grid small { font-size: 7px; }
.switch { width: 100%; height: 14px; border: 1px solid #a9b6cc; background: #a0a0a0; color: #fff; line-height: 12px; text-align: center; }
.switch.on { background: #007000; }
.spin { position: relative; display: flex; gap: 1px; }
.spin label { position: absolute; top: 0; left: -8px; right: -8px; text-align: center; font-size: 7px; }
.spin input, .spin select { flex: 1; min-width: 0; height: 14px; border: 1px solid #a9b6cc; border-radius: 0; background: #fff; color: #000; padding: 0; text-align: center; }
.spin button { width: 14px; height: 14px; border: 1px solid #a9b6cc; background: #a0a0a0; color: #fff; line-height: 10px; }
.spin.bare { padding-left: 15px; padding-right: 15px; }
.spin.bare em { position: absolute; right: -5px; font-size: 7px; font-style: normal; width: 16px; }
.spin select, .indicators select {
  appearance: none;
  background: #fff url("data:image/svg+xml,%3Csvg xmlns='http://www.w3.org/2000/svg' width='8' height='5'%3E%3Cpath d='M0 0h8L4 5z' fill='%23999'/%3E%3C/svg%3E") right 4px center no-repeat;
}
.folded { display: flex; align-items: center; height: 25px; padding: 0 10px 0 4px; font: 13px/20px "Open Sans", sans-serif; color: #1c1c44; }
.drop { margin-left: auto; border: 4px solid transparent; border-top: 5px solid #999; border-bottom: 0; }
.indicators { width: auto; }
.indicators table { table-layout: fixed; width: 570px; border-spacing: 0; margin-bottom: 25px; }
.indicators th { font-size: 7px; line-height: 13px; font-weight: normal; padding: 0; white-space: nowrap; }
.indicators td { height: 16px; padding: 0 1px 1px 0; }
.indicators tr:nth-child(3n+2) td { height: 15px; }
.indicators td:first-child { padding-left: 6px; }
.indicators input, .indicators select, .indicators button {
  display: block;
  width: 100%;
  height: 15px;
  border: 1px solid #a9b6cc;
  border-radius: 0;
  padding: 0 3px;
  background-color: #fff;
  color: #000;
  line-height: 12px;
}
.indicators tr:nth-child(3n+2) :is(input, select, button) { height: 14px; }
.indicators select { text-align: center; padding: 0 6px 0 0; background-position: right 1px center; }
.indicators button { background: #a0a0a0; color: #fff; padding: 0; }
.indicators button.on { background: #006800; }
.indicators .num { text-align: center; padding: 0; }
.c-no { width: 25px; }
.c-on { width: 27px; }
.c-mode { width: 52px; }
.c-name { width: 73px; }
.c-tf { width: 59px; }
.c-text { width: 52px; }
.c-set { width: 74px; }
.c-pm { width: 14px; }
.c-val { width: 24px; }

/* docked panels */
.dock { display: flex; background: #f0f0f0; padding: 4px 2px 3px 0; border-bottom: 1px solid #a0a0a0; }
.handle { width: 13px; flex: none; display: flex; flex-direction: column; font: 10px/12px "DejaVu Sans", sans-serif; }
.handle button { width: 10px; height: 14px; }
.handle span {
  flex: 1;
  width: 12px;
  writing-mode: vertical-rl;
  transform: rotate(180deg);
  white-space: nowrap;
  background: linear-gradient(#b4c2dc, #d6e4f8);
}
.market .handle { font-size: 11px; }
.dock-body { flex: 1; min-width: 0; display: flex; flex-direction: column; border: 1px solid #999; border-width: 1px 1px 0 1px; background: #fff; }
.ticks { position: relative; margin: 2px 1px 0 2px; border: 1px solid #000; }
.ticks h2 { position: absolute; margin: 2px; font: 10px/12px "DejaVu Sans Condensed", sans-serif; }
.ticks svg { display: block; }
.tick-times { display: flex; height: 20px; padding: 3px 0 0 3px; overflow: hidden; font: 10px/12px "DejaVu Sans Condensed", sans-serif; }
.tick-times span { flex: 0 0 32px; white-space: nowrap; }
.tick-times span:first-child { flex-basis: 64px; }
.market .tabs, .tester .tabs { padding-left: 3px; }
.market .tabs { height: 22px; }

.tester-main { display: flex; justify-content: space-between; }
.settings { padding: 6px 0 8px; font: 11px/14px "Liberation Sans", sans-serif; }
.row { display: flex; align-items: center; gap: 7px; margin-bottom: 8px; height: 21px; white-space: nowrap; }
.row.loose { margin-top: 16px; }
.row:last-child { margin-bottom: 0; }
.row > label { width: 127px; text-align: right; }
.row > label.after { width: auto; }
.settings select {
  appearance: none;
  height: 21px;
  border: 1px solid #aaa;
  border-radius: 0;
  padding: 0 3px;
  background: #e0e0e0 url("data:image/svg+xml,%3Csvg xmlns='http://www.w3.org/2000/svg' width='9' height='6'%3E%3Cpath d='M.5.5l4 4 4-4' fill='none' stroke='%23444'/%3E%3C/svg%3E") right 4px center no-repeat;
}
.settings select.white { background-color: #fff; border-color: #777; }
.settings select:disabled { opacity: 1; color: #777; border-color: #bbb; }
.w-m { width: 183px; }
.w-l { width: 360px; }
.w-s { width: 120px; }
.w-xs { width: 76px; }
.w-b { width: 240px; }
.lever { margin-left: 74px; }
.date { display: flex; align-items: center; gap: 2px; width: 117px; height: 20px; border: 1px solid #999; padding-right: 5px; }
.date input { flex: 1; min-width: 0; border: 0; background: none; color: #666; padding: 0 1px; }
.cal { width: 11px; height: 11px; border: 1px solid #bbb; background: repeating-linear-gradient(#eee 0 2px, #ccc 2px 3px); }
.adjust { width: 22px; height: 22px; margin-left: 1px; border: 1px solid #aaa; background: #e0e0e0; }
.adjust svg { width: 16px; height: 16px; display: block; margin: 2px; }
.check { display: flex; align-items: center; gap: 3px; }
.check input { appearance: none; width: 13px; height: 13px; border: 1px solid #333; background: #fff url("data:image/svg+xml,%3Csvg xmlns='http://www.w3.org/2000/svg' width='11' height='11'%3E%3Cpath d='M2 5l2.500 3L9 2.500' fill='none' stroke='%23222' stroke-width='1.300'/%3E%3C/svg%3E"); }
.tester .thumb { height: 82px; margin-top: 44px; }
.start { margin: 2px 1px 0 auto; width: 110px; height: 19px; border: 1px solid #78c030; background: #86d048; color: #000; }

.toolbox { flex: 1; }
.trades { width: 100%; table-layout: fixed; border-spacing: 0; margin-bottom: auto; }
.trades th, .trades td { padding: 0 5px; text-align: right; white-space: nowrap; }
.trades th { height: 24px; border-right: 1px solid #ddd; font-weight: normal; }
.trades th:nth-child(-n+2) { text-align: left; padding-left: 6px; }
.trades td { height: 20px; background: #c0c0c0; font-weight: 600; padding-right: 4px; }
.trades td:first-child { text-align: left; }
.trades td b { display: inline-block; width: 16px; padding-left: 3px; }
.trades .sorted i { display: inline-block; margin: 0 5px 3px 17px; border: 4px solid transparent; border-bottom-color: #000; border-top: 0; }
.t-symbol { width: 114px; }
.t-ticket { width: 79px; }
.t-time { width: 132px; }
.t-num { width: 88px; }
.toolbox .tabs { padding-left: 2px; overflow: hidden; }
.toolbox .tabs a { padding: 1px 8px; }
.toolbox sub { color: #e00000; font-size: 9px; margin-left: 2px; }
.services { display: flex; gap: 9px; margin-left: 8px; padding-top: 3px; color: #000; }
.services button { display: flex; align-items: center; gap: 4px; }
.services button:disabled { color: #999; }
.services svg { width: 14px; height: 15px; }

.status { display: flex; align-items: center; height: 25px; background: #f0f0f0; border-bottom: 2px solid #101528; }
.status span { border-left: 1px solid #999; height: 18px; line-height: 18px; white-space: nowrap; }
.status .help { width: 413px; border: 0; flex: none; }
.status .profile { width: 84px; flex: none; padding-left: 5px; overflow: hidden; }
.cell { width: 70px; }
.cell.wide { width: 97px; }
.status .traffic { display: flex; align-items: flex-end; gap: 1px; margin-left: auto; width: 117px; padding-left: 4px; line-height: 17px; }
.traffic i { width: 2px; height: 3px; margin-bottom: 4px; background: #0a9a2a; }
.traffic i:nth-child(2) { height: 4px; }
.traffic i:nth-child(3) { height: 6px; }
.traffic i:nth-child(4) { height: 8px; }
.traffic i:nth-child(5) { height: 10px; }
.traffic i:nth-child(6) { height: 12px; margin-right: 4px; }

/* context menu */
.context, .submenu { position: absolute; border: 1px solid #a0a0a0; background: #f0f0f0; padding: 2px; box-shadow: 1px 1px #888; }
.context { top: 135px; right: 4px; width: 214px; }
.submenu { top: 279px; right: 210px; width: 214px; border-color: #999; }
.context button { position: relative; display: flex; align-items: center; width: 100%; height: 23px; padding: 0 3px 0 28px; }
.context kbd { margin-left: auto; font: inherit; }
.context button:disabled { color: #6d6d6d; }
.context button svg { position: absolute; left: 5px; top: 3px; width: 16px; height: 16px; }
.context button.checked::before { content: ""; position: absolute; left: 1px; top: 0; width: 22px; height: 22px; background: #d5e1f5; border: 1px solid #fff; border-color: #999 #fff #fff #999; }
.context hr { margin: 4px 1px; border: 0; border-top: 1px solid #999; }
.context .more::after { content: ""; position: absolute; right: 6px; top: 7px; border: 4px solid transparent; border-left-color: #000; border-right: 0; }
.context .current { background: #3b58d8; color: #fff; }
.context .current::after { border-left-color: #fff; }
.marked { outline: 3px solid #ff3a18; outline-offset: -2px; }
.current.marked { outline-offset: -1px; }
.submenu .short { width: 184px; margin-left: 8px; padding-left: 20px; }
```
FILE: app.js
```
const icon = name => `<svg class="icon"><use href="#i-${name}"/></svg>`;

// navigator tree
const indicators = [
  'HLMM_CandleTimer_5', 'HLMM_ProMT5', 'OpenPriceDistance', 'OpenPriceDistanceNew',
  'Patterns_Signal_custom', 'Patterns_Signal_Original', 'RSI-2', 'smoothcandles_signal',
  'Sperman Scalping Dot', 'spread_indicator', 'TickChart-Original', 'TickChart', 'TickScalp(6)',
  'Tick_Candle_M1_V5.4', 'Tick_Candle_M30_V6', 'Tick_Candle_M5_V5.4', 'Time_Daymanagement',
  'Time_Day_Weekmanagement', 'Trend trigger factor JMA - mtf', 'Trend trigger factor JMA-test - mtf',
  'Unterchart-Kerzen'
];
const experts = [
  ['Market', 'cap', 'box'], ['Advisors', 'folder', 'box'], ['Examples', 'folder', 'box'],
  ['Free Robots', 'folder', 'box'], ['Old Experts', 'folder', 'box'],
  ['VolatilityIndexScalperPro', 'cap', ''], ['VolatilityIndexScalperPro_5_1_24', 'cap', '']
];
const node = (text, ico, cls = '') => `<div class="node ${cls}">${icon(ico)}${text}</div>`;
document.getElementById('tree').innerHTML =
  `<li><ul class="branch">${indicators.map(t => `<li>${node(t, 'indicator')}</li>`).join('')}</ul></li>` +
  `<li>${node('Experten', 'cap', 'box open')}<ul class="branch">${experts.map(e => `<li>${node(...e)}</li>`).join('')}</ul></li>` +
  `<li>${node('Skripte', 'script', 'box open')}</li>`;

// advisor settings
const eaRows = [
  ['BE Level', '', ['BE Activate', 1060], ['BE Amnt.', 940]],
  ['Stop Levels', '', ['Stop Loss', 4200], ['Take Profit', 14000]],
  ['Trailing Stop', '', ['Trailing Start', 198], ['Trailing Step', 2]],
  ['Breakeven', '', ['Level Profit', 280], null],
  ['Trailing Start', 'ab', ['Distance Breakeven', 1750], ['Trailing Step 2', 1]]
];
const spin = (s, i) => s ? `<div class="spin"><label for="${i}">${s[0]}</label><button>-</button><input id="${i}" value="${s[1]}"><button>+</button></div>` : '<div></div>';
const onOff = '<div><button class="switch on">ON</button></div><div><button class="switch">OFF</button></div>';
document.getElementById('ea').innerHTML = eaRows.map((r, i) =>
  `<span>${r[0]}</span>${onOff}<small>${r[1]}</small>${spin(r[2], 'ea' + i + 'a')}${spin(r[3], 'ea' + i + 'b')}`
).join('') +
  `<span>Trailing ATR</span>${onOff}<small>ab</small>` +
  '<div class="spin bare"><input value="1900" aria-label="ATR"><em>T-F</em></div>' +
  '<div class="spin"><select aria-label="T-F"><option>M2</option></select></div>';

// indicator table: mode, name, timeframe, buy, sell, settings, buffer, color, sell buffer
const rows = [
  ['TEXT', '', '', 'BUY', 'SELL', '', 0, 0, 0],
  ['TEXT', '', '', 'TBU', 'TSE', '', 0, 0, 0],
  ['TEXT', '', '', 'PBUY', 'PSELL', '', 0, 0, 0],
  ['TEXT', '', '', 'M15BU', 'M15SE', '', 0, 0, 0],
  ['COLOR', 'TickChart', '', '', '', '1,0,30,-50,true', 2, 1, 2],
  ['TEXT', '', '', 'OcBU', 'OcSE', '', 0, 0, 0],
  ['TEXT', '', '', 'SC_BUY', 'SC_SELL', '', 0, 0, 0],
  ['COLOR', 'OpenPriceDistance', 'M15', '', '', '', 0, 0, 0],
  ['COLOR', '001 - Simulator', 'M1', '', '', '', 0, 0, 0],
  ['TEXT', '', '', 'FESBU', 'FESSE', '', 0, 0, 0]
];
const text = v => `<td><input value="${v}" aria-label="Text"></td>`;
const pick = v => `<td><select aria-label="Auswahl"><option>${v}</option></select></td>`;
const num = v => `<td><button>-</button></td><td><input class="num" value="${v}" aria-label="Wert"></td><td><button>+</button></td>`;
document.getElementById('indicators').innerHTML = rows.map((r, i) =>
  `<tr><td>${i + 1}</td><td><button class="${i === 9 ? 'on' : ''}">${i === 9 ? 'ON' : 'OFF'}</button></td>` +
  pick(r[0]) + text(r[1]) + pick(r[2]) + text(r[3]) + text(r[4]) + text(r[5]) + num(r[6]) + num(r[7]) + num(r[8]) + '</tr>'
).join('');

// FES candles: colour, body top, body bottom, high, low
const fes = [
  ['b', 602, 606, 602, 606], ['r', 602, 624, 601, 625], ['b', 617, 624, 617, 631], ['r', 617, 622, 613, 625],
  ['b', 613, 622, 612, 631], ['b', 609, 613, 609, 622], ['b', 599, 609, 598, 614], ['r', 599, 602, 585, 602],
  ['b', 600, 602, 588, 603], ['b', 590, 601, 587, 610], ['r', 590, 606, 590, 608], ['r', 605, 612, 605, 617],
  ['b', 612, 613, 607, 619], ['b', 605, 613, 597, 613], ['b', 597, 606, 595, 608], ['r', 597, 599, 590, 601],
  ['r', 598, 624, 598, 626], ['b', 615, 624, 614, 631], ['b', 606, 617, 604, 617], ['b', 591, 607, 590, 608],
  ['r', 590, 598, 584, 603], ['r', 596, 599, 596, 599]
];
document.getElementById('fes').innerHTML = fes.map((c, i) => {
  const x = 291 + i * 16;
  const fill = c[0] === 'b' ? '#3aa5ff' : '#ff4a00';
  return `<g fill="${fill}"><rect x="${x}" y="${c[1]}" width="11" height="${c[2] - c[1]}"/><rect x="${x + 5}" y="${c[3]}" width="1" height="${c[4] - c[3]}"/></g>`;
}).join('');

// tick chart: key points, filled in with small jumps
const keys = [
  [0, 97], [7, 103], [22, 96], [31, 88], [48, 98], [67, 91], [75, 86], [81, 92], [90, 88], [97, 94], [105, 90],
  [120, 92], [129, 97], [135, 104], [143, 99], [148, 103], [154, 94], [161, 91], [179, 96], [189, 91], [199, 90],
  [205, 86], [218, 91], [232, 85], [252, 79], [271, 73], [283, 73], [291, 68], [310, 71], [329, 66], [334, 70],
  [352, 70], [359, 75], [371, 75], [383, 71], [391, 63], [403, 54], [414, 56], [424, 51], [440, 42], [448, 37],
  [461, 36], [469, 39], [485, 36], [495, 43], [505, 37], [518, 34], [528, 38], [536, 32], [550, 27], [562, 25],
  [569, 29], [576, 34], [585, 32], [599, 33], [615, 41], [680, 60], [760, 45], [840, 70], [1040, 60]
];
const tick = document.getElementById('ticks');
let seed = 7;
const rnd = () => (seed = (seed * 1103515245 + 12345) % 2147483648) / 2147483648;
let d = '';
for (let k = 0; k < keys.length - 1; k++) {
  const [x0, y0] = keys[k], [x1, y1] = keys[k + 1];
  for (let x = x0; x < x1; x += 2) {
    const y = Math.round(y0 + (y1 - y0) * (x - x0) / (x1 - x0) + (rnd() - 0.5) * 5);
    d += `${d ? 'L' : 'M'}${x} ${y}`;
  }
}
let grid = '';
for (let x = 32; x < 1040; x += 32) grid += `M${x}.5 0v109`;
for (const y of [15, 46, 78]) grid += `M0 ${y}.5h1040`;
tick.innerHTML =
  `<path d="${grid}" stroke="#ddd" stroke-dasharray="4 3" fill="none"/>` +
  `<path d="${d}" stroke="#ff4040" fill="none"/>` +
  `<path d="${d}" stroke="#3010e8" fill="none" transform="translate(0 1)"/>`;

const minutes = [19, 20, 21, 23, 24, 25, 26, 27, 28, 29, 30, 31, 32, 33, 34, 36, 37, 38, 39, 40, 41, 42, 43, 44];
document.getElementById('times').innerHTML = '<span>2025.01.18</span>' + minutes.map(m => `<span>16:${m}</span>`).join('');
```
